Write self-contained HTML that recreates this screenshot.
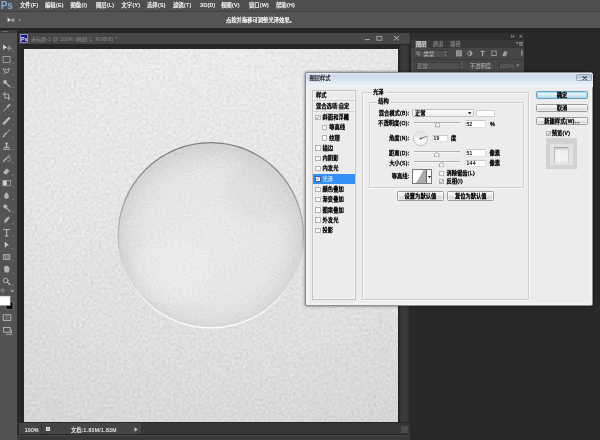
<!DOCTYPE html>
<html><head><meta charset="utf-8"><title>Photoshop</title><style>
html,body{margin:0;padding:0}
body{width:600px;height:440px;overflow:hidden;position:relative;background:#282828;font-family:"Liberation Sans","Noto Sans CJK SC",sans-serif}
.b{position:absolute;display:block}
.t{position:absolute;white-space:nowrap;font-size:5.3px;line-height:8px;height:8px;color:#111}
#ov text{font-family:"Liberation Sans","Noto Sans CJK SC",sans-serif;text-anchor:start;white-space:pre}
#ov g{stroke-linejoin:round}
</style></head><body>
<div class="b " style="left:0px;top:0px;width:600px;height:11.5px;background:#4f4f4f;border-bottom:1px solid #404040;box-sizing:border-box"></div>
<div class="b " style="left:0px;top:11.5px;width:600px;height:16.7px;background:#545454"></div>
<div class="b " style="left:0px;top:28.2px;width:600px;height:5px;background:#262626"></div>
<svg class="b" style="left:6px;top:16px;width:18px;height:9px" viewBox="0 0 18 9"><path d="M1.5 1.2 L5.2 4.2 L3.6 4.4 L1.8 6.2Z" fill="#ddd"/><path d="M6.8 2.2v4M4.8 4.2h4" stroke="#ccc" stroke-width=".8" fill="none"/><path d="M12.5 3.6h2.4l-1.2 1.4z" fill="#bbb"/></svg>
<div class="b " style="left:0px;top:30px;width:16.5px;height:410px;background:#535353"></div>
<div class="b " style="left:0px;top:30px;width:16.5px;height:3px;background:#3c3c3c"></div>
<div class="b " style="left:2px;top:31px;width:6px;height:1px;background:#6a6a6a"></div>
<div class="b " style="left:18.5px;top:32.8px;width:391.5px;height:402px;background:#272727"></div>
<div class="b " style="left:18.5px;top:32.8px;width:391.5px;height:11.7px;background:#474747"></div>
<div class="b " style="left:19.8px;top:34.2px;width:8px;height:8.6px;background:#1c1878;border:0.6px solid #8f90b8;box-sizing:border-box"></div>
<svg class="b" style="left:362px;top:34px;width:40px;height:9px" viewBox="0 0 40 9"><path d="M3 5.6h4.6" stroke="#a8a8a8" stroke-width="1.1"/><rect x="14.8" y="2.4" width="5" height="3.8" fill="none" stroke="#a8a8a8" stroke-width=".9"/><path d="M32 2l5 4.4M37 2l-5 4.4" stroke="#b4b4b4" stroke-width="1"/></svg>
<div class="b " style="left:400px;top:44.5px;width:8.5px;height:377.5px;background:linear-gradient(90deg,#323232,#3a3a3a 30%,#3a3a3a 70%,#303030)"></div>
<div class="b " style="left:18.5px;top:423.2px;width:391.5px;height:10.6px;background:#363636"></div>
<div class="b " style="left:18.5px;top:423.2px;width:122px;height:10.6px;background:#454545"></div>
<div class="b " style="left:41px;top:424px;width:0.8px;height:9px;background:#303030"></div>
<div class="b " style="left:401px;top:426.2px;width:7.4px;height:7.2px;background:#4c4c4c"></div>
<div class="b " style="left:45.6px;top:426.6px;width:4px;height:4.6px;background:#b0b0b0;border:1px solid #e0e0e0;box-sizing:border-box"></div>
<svg class="b" style="left:134px;top:427px;width:4px;height:5px" viewBox="0 0 4 5"><path d="M.5 .3L3.6 2.5L.5 4.7z" fill="#ccc"/></svg>
<div class="b " style="left:17px;top:435.4px;width:393px;height:4.6px;background:#393939;border-top:1px solid #454545;box-sizing:border-box"></div>
<svg class="b" style="left:23.5px;top:48.5px;width:374px;height:373.5px" viewBox="0 0 374 373.5">
<defs>
<linearGradient id="lg" x1="0" y1="0" x2="0" y2="1"><stop offset="0" stop-color="#eaeaea"/><stop offset=".45" stop-color="#e4e4e4"/><stop offset="1" stop-color="#dadada"/></linearGradient>
<radialGradient id="vg" cx="50%" cy="45%" r="75%"><stop offset=".55" stop-color="#000" stop-opacity="0"/><stop offset="1" stop-color="#000" stop-opacity=".025"/></radialGradient>
<radialGradient id="cg" cx="50%" cy="52%" r="50%"><stop offset="0" stop-color="#e9e9e9"/><stop offset=".7" stop-color="#e5e5e5"/><stop offset=".85" stop-color="#dfdfdf"/><stop offset="1" stop-color="#d3d3d3"/></radialGradient>
<linearGradient id="eg" x1="0" y1="0" x2="0" y2="1"><stop offset="0" stop-color="#7c7c7c"/><stop offset=".3" stop-color="#9c9c9c"/><stop offset=".55" stop-color="#c2c2c2"/><stop offset=".8" stop-color="#efefef"/><stop offset="1" stop-color="#fff"/></linearGradient>
<filter id="nz" x="0" y="0" width="100%" height="100%" color-interpolation-filters="sRGB"><feTurbulence type="fractalNoise" baseFrequency="0.36" numOctaves="2" seed="7" result="n"/><feColorMatrix in="n" type="matrix" values=".34 .33 .33 0 0  .34 .33 .33 0 0  .34 .33 .33 0 0  0 0 0 0 1" result="g"/><feComposite in="SourceGraphic" in2="g" operator="arithmetic" k1="0" k2="1" k3="0.22" k4="-0.11"/></filter>
<filter id="nz2" x="0" y="0" width="100%" height="100%" color-interpolation-filters="sRGB"><feTurbulence type="fractalNoise" baseFrequency="0.5" numOctaves="2" seed="11" result="n"/><feColorMatrix in="n" type="matrix" values=".34 .33 .33 0 0  .34 .33 .33 0 0  .34 .33 .33 0 0  0 0 0 0 1" result="g"/><feComposite in="SourceGraphic" in2="g" operator="arithmetic" k1="0" k2="1" k3="0.16" k4="-0.08" result="c"/><feComposite in="c" in2="SourceGraphic" operator="in"/></filter>
<filter id="bl"><feGaussianBlur stdDeviation="5"/></filter>
<clipPath id="cc"><circle cx="186.8" cy="186.3" r="92.6"/></clipPath>
</defs>
<g filter="url(#nz)">
<rect width="374" height="373.5" fill="url(#lg)"/>
<rect width="374" height="373.5" fill="url(#vg)"/>
</g>
<g filter="url(#nz2)"><circle cx="186.8" cy="186.3" r="92.6" fill="url(#cg)"/>
<g clip-path="url(#cc)">
<ellipse cx="236" cy="140" rx="34" ry="30" fill="#d2d2d2" filter="url(#bl)" opacity=".3"/>
<ellipse cx="150" cy="222" rx="40" ry="34" fill="#efefef" filter="url(#bl)" opacity=".35"/>
</g></g>
<circle cx="186.8" cy="186.3" r="92.6" fill="none" stroke="url(#eg)" stroke-width="1.3"/>
</svg>
<svg class="b" style="left:0;top:30px;width:17px;height:410px" viewBox="0 30 17 410"><g transform="translate(6.5 47.5)" fill="none" stroke="#b4b4b4" stroke-width=".9" stroke-linecap="round"><path d="M-3.5 -3L.6 .2L-1.3 .4L-3.2 2.4z" fill="#e0e0e0" stroke="none"/><path d="M2.6 -1.6v4.4M.4 .6h4.4" stroke-width=".8"/></g><g transform="translate(6.5 59.5)" fill="none" stroke="#b4b4b4" stroke-width=".9" stroke-linecap="round"><rect x="-3.4" y="-3" width="7" height="6" stroke-dasharray="1.2 .9" stroke-width=".8"/></g><g transform="translate(6.5 71)" fill="none" stroke="#b4b4b4" stroke-width=".9" stroke-linecap="round"><path d="M-3 -2.2q3.2 2.6 6 -.4l-1.6 4.2l-2.8 -.6zM-1 1.6l-1.6 1.8"/></g><g transform="translate(6.5 83.5)" fill="none" stroke="#b4b4b4" stroke-width=".9" stroke-linecap="round"><circle cx="-1.4" cy="-1.4" r="2" fill="#b4b4b4" stroke="none"/><path d="M.2 .2l3.2 3" stroke-width="1.3"/></g><g transform="translate(6.5 96)" fill="none" stroke="#b4b4b4" stroke-width=".9" stroke-linecap="round"><path d="M-1.8 -3.6v5.6h5.6M-3.6 -1.8h5.6v5.6" stroke-width=".9"/></g><g transform="translate(6.5 108)" fill="none" stroke="#b4b4b4" stroke-width=".9" stroke-linecap="round"><path d="M-3 3.2l4 -4.2" stroke-width="1"/><path d="M1.2 -1.4l1.8 -1.8" stroke-width="1.9"/></g><g transform="translate(6.5 121)" fill="none" stroke="#b4b4b4" stroke-width=".9" stroke-linecap="round"><path d="M-2.8 2.6l5.4 -5.4" stroke-width="2.4"/></g><g transform="translate(6.5 133.5)" fill="none" stroke="#b4b4b4" stroke-width=".9" stroke-linecap="round"><path d="M-3.2 3.4q1 -2.6 3 -3.6" stroke-width="1.4"/><path d="M.4 -.8l3 -3" stroke-width="1"/></g><g transform="translate(6.5 146)" fill="none" stroke="#b4b4b4" stroke-width=".9" stroke-linecap="round"><path d="M-3 3.2h6.2M-2.2 1.4h4.6M.1 1.2v-2.4" stroke-width="1.1"/><circle cx=".1" cy="-2.4" r="1.3" fill="#b4b4b4" stroke="none"/></g><g transform="translate(6.5 158.5)" fill="none" stroke="#b4b4b4" stroke-width=".9" stroke-linecap="round"><path d="M-3 3.2q1 -2.4 2.8 -3.4" stroke-width="1.3"/><path d="M.4 -.8l2.6 -2.6" stroke-width="1"/><path d="M1.6 2.8a2 2 0 1 0 -1.4 -1" stroke-width=".6"/></g><g transform="translate(6.5 171)" fill="none" stroke="#b4b4b4" stroke-width=".9" stroke-linecap="round"><path d="M-3.4 1.6l3.4 -4l3 2.2l-3.4 4z" fill="#b4b4b4" stroke="none"/></g><g transform="translate(6.5 183)" fill="none" stroke="#b4b4b4" stroke-width=".9" stroke-linecap="round"><rect x="-3.6" y="-2.6" width="7.4" height="5.4" stroke-width=".7"/><rect x="-3.2" y="-2.2" width="3.4" height="4.6" fill="#d8d8d8" stroke="none"/></g><g transform="translate(6.5 195.5)" fill="none" stroke="#b4b4b4" stroke-width=".9" stroke-linecap="round"><path d="M0 -3.6q3.6 4.2 1.8 6.2q-1.8 1.6 -3.6 0q-1.8 -2 1.8 -6.2z" fill="#b4b4b4" stroke="none"/></g><g transform="translate(6.5 208)" fill="none" stroke="#b4b4b4" stroke-width=".9" stroke-linecap="round"><circle cx="-1.2" cy="-1.4" r="2.1" fill="#b4b4b4" stroke="none"/><path d="M.4 .4l3 3" stroke-width="1.1"/></g><g transform="translate(6.5 220)" fill="none" stroke="#b4b4b4" stroke-width=".9" stroke-linecap="round"><path d="M-2.6 3.4l1 -4.2l3.6 -2.8l1.2 1.2l-2.6 3.8z" fill="#b4b4b4" stroke="none"/></g><g transform="translate(6.5 232.5)" fill="none" stroke="#b4b4b4" stroke-width=".9" stroke-linecap="round"><path d="M-2.8 -3h5.8M.1 -3v6.4M-1.2 3.4h2.6" stroke-width="1.2"/></g><g transform="translate(6.5 245)" fill="none" stroke="#b4b4b4" stroke-width=".9" stroke-linecap="round"><path d="M-1.8 -3.6l4.4 4l-2.2 .2l-2 2.4z" fill="#cfcfcf" stroke="none"/></g><g transform="translate(6.5 257)" fill="none" stroke="#b4b4b4" stroke-width=".9" stroke-linecap="round"><rect x="-3.2" y="-2.4" width="6.6" height="5" fill="#7a7a7a" stroke-width=".8"/></g><g transform="translate(6.5 269.5)" fill="none" stroke="#b4b4b4" stroke-width=".9" stroke-linecap="round"><path d="M-2.6 -.6q0 -3 2.6 -3.2q2.8 .2 3 3.2l-.6 3.6h-4z" fill="#b4b4b4" stroke="none"/></g><g transform="translate(6.5 281.5)" fill="none" stroke="#b4b4b4" stroke-width=".9" stroke-linecap="round"><circle cx="-.8" cy="-1" r="2.3" stroke-width="1"/><path d="M1 .8l2.6 2.6" stroke-width="1.3"/></g><rect x="12.4" y="50.7" width="1.1" height="1.1" fill="#8e8e8e"/><rect x="12.4" y="62.7" width="1.1" height="1.1" fill="#8e8e8e"/><rect x="12.4" y="74.2" width="1.1" height="1.1" fill="#8e8e8e"/><rect x="12.4" y="86.7" width="1.1" height="1.1" fill="#8e8e8e"/><rect x="12.4" y="99.2" width="1.1" height="1.1" fill="#8e8e8e"/><rect x="12.4" y="111.2" width="1.1" height="1.1" fill="#8e8e8e"/><rect x="12.4" y="124.2" width="1.1" height="1.1" fill="#8e8e8e"/><rect x="12.4" y="136.7" width="1.1" height="1.1" fill="#8e8e8e"/><rect x="12.4" y="149.2" width="1.1" height="1.1" fill="#8e8e8e"/><rect x="12.4" y="161.7" width="1.1" height="1.1" fill="#8e8e8e"/><rect x="12.4" y="174.2" width="1.1" height="1.1" fill="#8e8e8e"/><rect x="12.4" y="186.2" width="1.1" height="1.1" fill="#8e8e8e"/><rect x="12.4" y="198.7" width="1.1" height="1.1" fill="#8e8e8e"/><rect x="12.4" y="211.2" width="1.1" height="1.1" fill="#8e8e8e"/><rect x="12.4" y="223.2" width="1.1" height="1.1" fill="#8e8e8e"/><rect x="12.4" y="235.7" width="1.1" height="1.1" fill="#8e8e8e"/><rect x="12.4" y="248.2" width="1.1" height="1.1" fill="#8e8e8e"/><rect x="12.4" y="260.2" width="1.1" height="1.1" fill="#8e8e8e"/><rect x="12.4" y="272.7" width="1.1" height="1.1" fill="#8e8e8e"/><rect x="12.4" y="284.7" width="1.1" height="1.1" fill="#8e8e8e"/><path d="M1.2 290.5a1.4 1.4 0 1 1 0 .1M11 289.5l2 2M13 289.5v2h-2" stroke="#bbb" stroke-width=".7" fill="none"/><rect x="6" y="302" width="7" height="7.6" fill="#0c0c0c" stroke="#8d8d8d" stroke-width=".6"/><rect x="-1" y="296" width="11.2" height="9.6" fill="#fff" stroke="#8d8d8d" stroke-width=".6"/><rect x="3.2" y="314.8" width="7.6" height="5.6" fill="none" stroke="#bdbdbd" stroke-width=".9"/><circle cx="7" cy="317.6" r="1.2" fill="none" stroke="#bdbdbd" stroke-width=".6" stroke-dasharray=".7 .5"/><rect x="3.6" y="327.6" width="6.6" height="4.6" fill="none" stroke="#bdbdbd" stroke-width=".9"/><path d="M5.8 334.4h5.6v-4.6" fill="none" stroke="#bdbdbd" stroke-width=".8"/></svg>
<div class="b " style="left:411px;top:33px;width:112.5px;height:40px;background:#464646"></div>
<div class="b " style="left:411px;top:33px;width:112.5px;height:7px;background:#2f2f2f"></div>
<div class="b " style="left:411px;top:40px;width:112.5px;height:8px;background:#393939"></div>
<div class="b " style="left:415px;top:40.6px;width:12.4px;height:7.4px;background:#5c5c5c"></div>
<div class="b " style="left:415.5px;top:49.6px;width:32px;height:8.2px;background:#505050;border:1px solid #3c3c3c;box-sizing:border-box"></div>
<div class="b " style="left:411px;top:59.3px;width:112.5px;height:1px;background:#3a3a3a"></div>
<div class="b " style="left:415.5px;top:61.6px;width:44.5px;height:8.2px;background:#4f4f4f;border:1px solid #3c3c3c;box-sizing:border-box"></div>
<div class="b " style="left:498px;top:61.8px;width:16px;height:8px;background:#424242"></div>
<svg class="b" style="left:411px;top:33px;width:113px;height:40px" viewBox="411 33 113 40" fill="none" stroke="#9a9a9a" stroke-width=".8"><path d="M511 35.2l1.4 1.2l-1.4 1.2M513 35.2l1.4 1.2l-1.4 1.2" stroke="#b5b5b5" stroke-width=".7"/><path d="M519.6 35.2l2.2 2.4M521.8 35.2l-2.2 2.4" stroke="#b5b5b5" stroke-width=".7"/><path d="M516.4 42.6h1.8l-.9 1.2zM519 42.4h4M519 43.8h4M519 45.2h4" stroke="#a8a8a8" stroke-width=".7"/><circle cx="417.6" cy="53" r="1.5" stroke="#aaa" stroke-width=".7"/><path d="M418.6 54.2l1.4 1.8" stroke="#aaa"/><path d="M445 52.4l1 -1.2l1 1.2M445 54.6l1 1.2l1 -1.2" stroke="#999" stroke-width=".6"/><rect x="456.4" y="50.8" width="5.2" height="5.2" fill="#8a8a8a" stroke="#b0b0b0" stroke-width=".6"/><circle cx="469.8" cy="53.4" r="2.3" stroke="#a0a0a0"/><path d="M469.8 51.1a2.3 2.3 0 0 1 0 4.6z" fill="#a0a0a0" stroke="none"/><path d="M480.6 51.4h4M482.6 51.4v4.6" stroke="#b4b4b4" stroke-width="1"/><rect x="491.8" y="51" width="4.4" height="4.6" stroke="#a8a8a8" stroke-width=".8"/><path d="M502.6 56l1.6 -4.2h2.8l-1.2 4.2z" fill="#9a9a9a" stroke="#b0b0b0" stroke-width=".5"/><rect x="521" y="50.4" width="1.6" height="5.4" fill="#8c8c8c" stroke="none"/><path d="M460.6 64.6l1 -1.2l1 1.2M460.6 66.8l1 1.2l1 -1.2" stroke="#999" stroke-width=".6"/><path d="M516 64.6h3.6l-1.8 2.2z" fill="#8a8a8a" stroke="none"/></svg>
<div class="b " style="left:305.3px;top:72px;width:288px;height:234.3px;background:#f3f3f3;border:0.7px solid #8e8e8e;box-sizing:border-box;box-shadow:0 0 3px rgba(0,0,0,.6);border-radius:2px"></div>
<div class="b " style="left:306px;top:72.7px;width:286.6px;height:14px;background:linear-gradient(#f4f7fb 0,#cfdcee 8%,#d3dff0 35%,#e3ebf5 70%,#f1f4f8);border-radius:2px 2px 0 0"></div>
<div class="b " style="left:309px;top:86.5px;width:280.7px;height:216px;background:#ececec"></div>
<div class="b " style="left:576.4px;top:74.2px;width:15.2px;height:6.8px;background:linear-gradient(#c9d3e3,#aebcd2 45%,#bfcbdc 55%,#e3e9f1);border:1px solid #97a4ba;box-sizing:border-box;border-radius:1.5px"></div>
<svg class="b" style="left:581.8px;top:75.6px;width:5.4px;height:4.2px" viewBox="0 0 5.4 4.2"><path d="M.6 .4L4.8 3.8M4.8 .4L.6 3.8" fill="none" stroke="#39435a" stroke-width="1.2"/></svg>
<div class="b " style="left:312.2px;top:89.5px;width:43.5px;height:210px;background:#ececec;border:1px solid #c4c4c4;box-sizing:border-box;box-shadow:inset 0 0 0 0.6px #f8f8f8"></div>
<div class="b " style="left:313px;top:100px;width:42px;height:1px;background:#d2d2d2"></div>
<div class="b " style="left:313px;top:111.2px;width:42px;height:1px;background:#d2d2d2"></div>
<div class="b " style="left:315.2px;top:114.60000000000001px;width:5.4px;height:5.4px;background:#f9f9f9;border:1px solid #b1b4b9;box-sizing:border-box"></div><svg class="b" style="left:315.3px;top:114.7px;width:5.2px;height:5.2px" viewBox="0 0 5.2 5.2"><path d="M1.1 2.7l1.1 1.2l2-2.7" fill="none" stroke="#5a6788" stroke-width=".7"/></svg>
<div class="b " style="left:321.8px;top:124.88000000000001px;width:5.4px;height:5.4px;background:#f9f9f9;border:1px solid #b1b4b9;box-sizing:border-box"></div>
<div class="b " style="left:321.8px;top:135.16px;width:5.4px;height:5.4px;background:#f9f9f9;border:1px solid #b1b4b9;box-sizing:border-box"></div>
<div class="b " style="left:315.2px;top:145.44px;width:5.4px;height:5.4px;background:#f9f9f9;border:1px solid #b1b4b9;box-sizing:border-box"></div>
<div class="b " style="left:315.2px;top:155.72px;width:5.4px;height:5.4px;background:#f9f9f9;border:1px solid #b1b4b9;box-sizing:border-box"></div>
<div class="b " style="left:315.2px;top:166.0px;width:5.4px;height:5.4px;background:#f9f9f9;border:1px solid #b1b4b9;box-sizing:border-box"></div>
<div class="b " style="left:313px;top:173.98px;width:42.2px;height:9.8px;background:#3390f4"></div>
<div class="b " style="left:315.2px;top:176.28px;width:5.4px;height:5.4px;background:#f9f9f9;border:1px solid #4a5f95;box-sizing:border-box"></div><svg class="b" style="left:315.3px;top:176.38px;width:5.2px;height:5.2px" viewBox="0 0 5.2 5.2"><path d="M1.1 2.7l1.1 1.2l2-2.7" fill="none" stroke="#5a6788" stroke-width=".7"/></svg>
<div class="b " style="left:315.2px;top:186.56px;width:5.4px;height:5.4px;background:#f9f9f9;border:1px solid #b1b4b9;box-sizing:border-box"></div>
<div class="b " style="left:315.2px;top:196.84px;width:5.4px;height:5.4px;background:#f9f9f9;border:1px solid #b1b4b9;box-sizing:border-box"></div>
<div class="b " style="left:315.2px;top:207.12px;width:5.4px;height:5.4px;background:#f9f9f9;border:1px solid #b1b4b9;box-sizing:border-box"></div>
<div class="b " style="left:315.2px;top:217.4px;width:5.4px;height:5.4px;background:#f9f9f9;border:1px solid #b1b4b9;box-sizing:border-box"></div>
<div class="b " style="left:315.2px;top:227.68px;width:5.4px;height:5.4px;background:#f9f9f9;border:1px solid #b1b4b9;box-sizing:border-box"></div>
<div class="b " style="left:362px;top:92.3px;width:166.5px;height:208px;border:0.7px solid #d0d0d0;box-sizing:border-box;box-shadow:0.6px 0.6px 0 #fff, inset 0.6px 0.6px 0 #fff"></div>
<div class="b " style="left:368.5px;top:101.5px;width:155.5px;height:86.2px;border:0.7px solid #cfcfcf;box-sizing:border-box;box-shadow:0.6px 0.6px 0 #fff, inset 0.6px 0.6px 0 #fff"></div>
<div class="b " style="left:371.5px;top:88px;width:14.5px;height:8px;background:#ececec"></div>
<div class="b " style="left:377px;top:97px;width:13.5px;height:8px;background:#ececec"></div>
<div class="b " style="left:412.3px;top:109.3px;width:61.3px;height:8.2px;background:linear-gradient(#fdfdfd,#ededed);border:1px solid #c2c2c2;box-sizing:border-box;border-radius:1px"></div>
<svg class="b" style="left:468.3px;top:112.3px;width:3.4px;height:2.4px" viewBox="0 0 3.4 2.4"><path d="M0 0h3.4L1.7 2.4z" fill="#222"/></svg>
<div class="b " style="left:476px;top:109.5px;width:19px;height:7.4px;background:#fff;border:1px solid #cfcfcf;box-sizing:border-box"></div>
<div class="b " style="left:414px;top:121.89999999999999px;width:45.5px;height:2px;background:linear-gradient(#a9a9a9,#bdbdbd 55%,#f6f6f6 60%)"></div><svg class="b" style="left:434.90000000000003px;top:122.3px;width:5.4px;height:5.4px" viewBox="0 0 5.4 5.4"><path d="M2.7 .4L4.9 2V4.9H.5V2z" fill="#f2f2f2" stroke="#8a8a8a" stroke-width=".7" stroke-linejoin="round"/></svg>
<div class="b " style="left:464.6px;top:120.4px;width:21.3px;height:7.6px;background:#fff;border:1px solid #e0e0e0;border-top-color:#c6c6c6;box-sizing:border-box"></div>
<div class="b " style="left:414px;top:151.10000000000002px;width:45.5px;height:2px;background:linear-gradient(#a9a9a9,#bdbdbd 55%,#f6f6f6 60%)"></div><svg class="b" style="left:434.3px;top:151.5px;width:5.4px;height:5.4px" viewBox="0 0 5.4 5.4"><path d="M2.7 .4L4.9 2V4.9H.5V2z" fill="#f2f2f2" stroke="#8a8a8a" stroke-width=".7" stroke-linejoin="round"/></svg>
<div class="b " style="left:464.6px;top:149.4px;width:21.3px;height:7.6px;background:#fff;border:1px solid #e0e0e0;border-top-color:#c6c6c6;box-sizing:border-box"></div>
<div class="b " style="left:414px;top:161.3px;width:45.5px;height:2px;background:linear-gradient(#a9a9a9,#bdbdbd 55%,#f6f6f6 60%)"></div><svg class="b" style="left:439.0px;top:161.7px;width:5.4px;height:5.4px" viewBox="0 0 5.4 5.4"><path d="M2.7 .4L4.9 2V4.9H.5V2z" fill="#f2f2f2" stroke="#8a8a8a" stroke-width=".7" stroke-linejoin="round"/></svg>
<div class="b " style="left:464.6px;top:159.6px;width:21.3px;height:7.6px;background:#fff;border:1px solid #e0e0e0;border-top-color:#c6c6c6;box-sizing:border-box"></div>
<svg class="b" style="left:413.2px;top:131.2px;width:15.2px;height:15.2px" viewBox="0 0 15.2 15.2"><circle cx="7.6" cy="7.6" r="7" fill="#f7f7f7" stroke="#ababab" stroke-width=".7"/><path d="M7.6 7.6L1.2 4.8A7 7 0 0 1 14 4.8z" fill="#e6e6e6"/><path d="M7.6 7.6L13.6 5.5" stroke="#333" stroke-width=".7"/><path d="M6.6 7.6h2M7.6 6.6v2" stroke="#333" stroke-width=".6"/></svg>
<div class="b " style="left:431.6px;top:134.8px;width:16.6px;height:7.6px;background:#fff;border:1px solid #e0e0e0;border-top-color:#c6c6c6;box-sizing:border-box"></div>
<div class="b " style="left:411.8px;top:169.4px;width:20px;height:14.6px;background:#fff;border:1px solid #787878;box-sizing:border-box"></div>
<svg class="b" style="left:412.5px;top:170.1px;width:13.5px;height:13.2px" viewBox="0 0 13.5 13.2"><rect width="13.5" height="13.2" fill="#fff"/><path d="M2.5 13.2C5 11 8 4 10.5 0H13.5V13.2z" fill="#aaa"/></svg>
<div class="b " style="left:426px;top:170px;width:0.7px;height:13.4px;background:#666"></div>
<svg class="b" style="left:427.6px;top:175.6px;width:3px;height:2.2px" viewBox="0 0 3 2.2"><path d="M0 0h3L1.5 2.2z" fill="#111"/></svg>
<div class="b " style="left:439px;top:170.8px;width:5.4px;height:5.4px;background:#f9f9f9;border:1px solid #b1b4b9;box-sizing:border-box"></div>
<div class="b " style="left:439px;top:178.70000000000002px;width:5.4px;height:5.4px;background:#f9f9f9;border:1px solid #b1b4b9;box-sizing:border-box"></div><svg class="b" style="left:439.1px;top:178.8px;width:5.2px;height:5.2px" viewBox="0 0 5.2 5.2"><path d="M1.1 2.7l1.1 1.2l2-2.7" fill="none" stroke="#5a6788" stroke-width=".7"/></svg>
<div class="b btn" style="left:397px;top:191.3px;width:46.8px;height:9.3px;background:linear-gradient(#f7f7f7,#ececec 48%,#dedede 52%,#d6d6d6);border:1px solid #9c9c9c;box-sizing:border-box;border-radius:1.5px;box-shadow:inset 0 0 0 0.6px #fcfcfc"></div>
<div class="b btn" style="left:447.3px;top:191.3px;width:46.8px;height:9.3px;background:linear-gradient(#f7f7f7,#ececec 48%,#dedede 52%,#d6d6d6);border:1px solid #9c9c9c;box-sizing:border-box;border-radius:1.5px;box-shadow:inset 0 0 0 0.6px #fcfcfc"></div>
<div class="b btn" style="left:535.8px;top:90.6px;width:52.6px;height:8.5px;background:linear-gradient(#eef6fb,#e0eff8 48%,#cfe6f3 52%,#c3deee);border:1px solid #6f9cb8;box-sizing:border-box;border-radius:1.5px;box-shadow:inset 0 0 0 0.8px #8fdcf2"></div>
<div class="b btn" style="left:535.8px;top:103.6px;width:52.6px;height:8.5px;background:linear-gradient(#f7f7f7,#ececec 48%,#dedede 52%,#d6d6d6);border:1px solid #9c9c9c;box-sizing:border-box;border-radius:1.5px;box-shadow:inset 0 0 0 0.6px #fcfcfc"></div>
<div class="b btn" style="left:535.8px;top:116.7px;width:52.6px;height:8.5px;background:linear-gradient(#f7f7f7,#ececec 48%,#dedede 52%,#d6d6d6);border:1px solid #9c9c9c;box-sizing:border-box;border-radius:1.5px;box-shadow:inset 0 0 0 0.6px #fcfcfc"></div>
<div class="b " style="left:545.6px;top:130.70000000000002px;width:5.4px;height:5.4px;background:#f9f9f9;border:1px solid #b1b4b9;box-sizing:border-box"></div><svg class="b" style="left:545.7px;top:130.8px;width:5.2px;height:5.2px" viewBox="0 0 5.2 5.2"><path d="M1.1 2.7l1.1 1.2l2-2.7" fill="none" stroke="#5a6788" stroke-width=".7"/></svg>
<div class="b " style="left:546px;top:138px;width:30.6px;height:30.6px;background:#d2d2d2"></div>
<div class="b " style="left:550.4px;top:143.5px;width:22.4px;height:21.3px;background:#e2e2e2"></div>
<div class="b " style="left:554.2px;top:147.3px;width:14.4px;height:15.3px;background:linear-gradient(#8e8e8e,#cfcfcf 9%,#ececec 22%,#f1f1f1 80%,#e6e6e6);border-left:1px solid #bcbcbc;border-right:1px solid #cdcdcd;box-sizing:border-box"></div>
<div class="b " style="left:556.5px;top:149.5px;width:3.4px;height:12px;background:linear-gradient(90deg,rgba(255,255,255,0),rgba(255,255,255,.7),rgba(255,255,255,0))"></div>
<svg id="ov" class="b" style="left:0;top:0;width:600px;height:440px;will-change:transform;filter:blur(0.3px)" viewBox="0 0 600 440"><text x="0.8" y="8.8" font-size="10" font-weight="bold" fill="#84a9d2" style="text-anchor:start" letter-spacing="-0.2">Ps</text>
<text x="20.00" y="7.47" fill="#f2f2f2" font-size="5.35" stroke="#f2f2f2" stroke-width="0.225">文件</text><text x="30.89" y="7.47" fill="#f2f2f2" font-size="5.08" stroke="#f2f2f2" stroke-width="0.225" letter-spacing="0.374" xml:space="preserve">(F)</text>
<text x="45.00" y="7.47" fill="#f2f2f2" font-size="5.35" stroke="#f2f2f2" stroke-width="0.225">编辑</text><text x="55.89" y="7.47" fill="#f2f2f2" font-size="5.08" stroke="#f2f2f2" stroke-width="0.225" letter-spacing="0.374" xml:space="preserve">(E)</text>
<text x="70.50" y="7.47" fill="#f2f2f2" font-size="5.35" stroke="#f2f2f2" stroke-width="0.225">图像</text><text x="81.39" y="7.47" fill="#f2f2f2" font-size="5.08" stroke="#f2f2f2" stroke-width="0.225" letter-spacing="0.374" xml:space="preserve">(I)</text>
<text x="96.00" y="7.47" fill="#f2f2f2" font-size="5.35" stroke="#f2f2f2" stroke-width="0.225">图层</text><text x="106.89" y="7.47" fill="#f2f2f2" font-size="5.08" stroke="#f2f2f2" stroke-width="0.225" letter-spacing="0.374" xml:space="preserve">(L)</text>
<text x="121.50" y="7.47" fill="#f2f2f2" font-size="5.35" stroke="#f2f2f2" stroke-width="0.225">文字</text><text x="132.39" y="7.47" fill="#f2f2f2" font-size="5.08" stroke="#f2f2f2" stroke-width="0.225" letter-spacing="0.374" xml:space="preserve">(Y)</text>
<text x="147.00" y="7.47" fill="#f2f2f2" font-size="5.35" stroke="#f2f2f2" stroke-width="0.225">选择</text><text x="157.89" y="7.47" fill="#f2f2f2" font-size="5.08" stroke="#f2f2f2" stroke-width="0.225" letter-spacing="0.374" xml:space="preserve">(S)</text>
<text x="173.00" y="7.47" fill="#f2f2f2" font-size="5.35" stroke="#f2f2f2" stroke-width="0.225">滤镜</text><text x="183.89" y="7.47" fill="#f2f2f2" font-size="5.08" stroke="#f2f2f2" stroke-width="0.225" letter-spacing="0.374" xml:space="preserve">(T)</text>
<text x="200.19" y="7.47" fill="#f2f2f2" font-size="5.08" stroke="#f2f2f2" stroke-width="0.225" letter-spacing="0.374" xml:space="preserve">3D(D)</text>
<text x="221.00" y="7.47" fill="#f2f2f2" font-size="5.35" stroke="#f2f2f2" stroke-width="0.225">视图</text><text x="231.89" y="7.47" fill="#f2f2f2" font-size="5.08" stroke="#f2f2f2" stroke-width="0.225" letter-spacing="0.374" xml:space="preserve">(V)</text>
<text x="249.00" y="7.47" fill="#f2f2f2" font-size="5.35" stroke="#f2f2f2" stroke-width="0.225">窗口</text><text x="259.89" y="7.47" fill="#f2f2f2" font-size="5.08" stroke="#f2f2f2" stroke-width="0.225" letter-spacing="0.374" xml:space="preserve">(W)</text>
<text x="276.00" y="7.47" fill="#f2f2f2" font-size="5.35" stroke="#f2f2f2" stroke-width="0.225">帮助</text><text x="286.89" y="7.47" fill="#f2f2f2" font-size="5.08" stroke="#f2f2f2" stroke-width="0.225" letter-spacing="0.374" xml:space="preserve">(H)</text>
<text x="226.00" y="21.86" fill="#ffffff" font-size="5.30" stroke="#ffffff" stroke-width="0.223">点按并拖移可调整光泽效果。</text>
<text x="21" y="40.6" font-size="5.4" font-weight="bold" fill="#e8e8ff" style="text-anchor:start">Ps</text>
<text x="31.00" y="40.57" fill="#8c8c8c" font-size="5.05" stroke="#8c8c8c" stroke-width="0.030">未标题</text><text x="46.33" y="40.57" fill="#8c8c8c" font-size="4.80" stroke="#8c8c8c" stroke-width="0.030" letter-spacing="0.354" xml:space="preserve">-1 @ 100% (</text><text x="77.04" y="40.57" fill="#8c8c8c" font-size="5.05" stroke="#8c8c8c" stroke-width="0.030">椭圆</text><text x="87.32" y="40.57" fill="#8c8c8c" font-size="4.80" stroke="#8c8c8c" stroke-width="0.030" letter-spacing="0.354" xml:space="preserve"> 1, RGB/8) *</text>
<text x="24.68" y="431.64" fill="#eeeeee" font-size="5.01" stroke="#eeeeee" stroke-width="0.126" letter-spacing="0.369" xml:space="preserve">100%</text>
<text x="71.00" y="431.64" fill="#eeeeee" font-size="5.27" stroke="#eeeeee" stroke-width="0.126">文档</text><text x="81.72" y="431.64" fill="#eeeeee" font-size="5.01" stroke="#eeeeee" stroke-width="0.126" letter-spacing="0.369" xml:space="preserve">:1.83M/1.83M</text>
<text x="415.90" y="46.14" fill="#f2f2f2" font-size="5.27" stroke="#f2f2f2" stroke-width="0.063">图层</text>
<text x="432.80" y="46.14" fill="#9a9a9a" font-size="5.27" stroke="#9a9a9a" stroke-width="0.032">通道</text>
<text x="450.30" y="46.14" fill="#9a9a9a" font-size="5.27" stroke="#9a9a9a" stroke-width="0.032">路径</text>
<text x="423.50" y="55.55" fill="#b8b8b8" font-size="5.27" stroke="#b8b8b8" stroke-width="0.032">类型</text>
<text x="417.20" y="67.64" fill="#9a9a9a" font-size="5.27" stroke="#9a9a9a" stroke-width="0.032">正常</text>
<text x="470.00" y="67.64" fill="#b8b8b8" font-size="5.27" stroke="#b8b8b8" stroke-width="0.032">不透明度</text><text x="491.26" y="67.64" fill="#b8b8b8" font-size="5.01" stroke="#b8b8b8" stroke-width="0.032" letter-spacing="0.369" xml:space="preserve">:</text>
<text x="499.78" y="67.64" fill="#7a7a7a" font-size="5.01" stroke="#7a7a7a" stroke-width="0.032" letter-spacing="0.369" xml:space="preserve">100%</text>
<text x="309.50" y="80.44" fill="#101010" font-size="5.27" stroke="#101010" stroke-width="0.174">图层样式</text>
<text x="316.00" y="96.64" fill="#000000" font-size="5.27" stroke="#000000" stroke-width="0.316">样式</text>
<text x="316.00" y="107.84" fill="#000000" font-size="5.27" stroke="#000000" stroke-width="0.316">混合选项</text><text x="337.26" y="107.84" fill="#000000" font-size="5.01" stroke="#000000" stroke-width="0.316" letter-spacing="0.369" xml:space="preserve">:</text><text x="338.84" y="107.84" fill="#000000" font-size="5.27" stroke="#000000" stroke-width="0.316">自定</text>
<text x="322.60" y="119.04" fill="#000000" font-size="5.27" stroke="#000000" stroke-width="0.316">斜面和浮雕</text>
<text x="329.20" y="129.32" fill="#000000" font-size="5.27" stroke="#000000" stroke-width="0.316">等高线</text>
<text x="329.20" y="139.60" fill="#000000" font-size="5.27" stroke="#000000" stroke-width="0.316">纹理</text>
<text x="322.60" y="149.89" fill="#000000" font-size="5.27" stroke="#000000" stroke-width="0.316">描边</text>
<text x="322.60" y="160.17" fill="#000000" font-size="5.27" stroke="#000000" stroke-width="0.316">内阴影</text>
<text x="322.60" y="170.45" fill="#000000" font-size="5.27" stroke="#000000" stroke-width="0.316">内发光</text>
<text x="322.60" y="180.73" fill="#d6e8ff" font-size="5.27" stroke="#d6e8ff" stroke-width="0.095">光泽</text>
<text x="322.60" y="191.01" fill="#000000" font-size="5.27" stroke="#000000" stroke-width="0.316">颜色叠加</text>
<text x="322.60" y="201.29" fill="#000000" font-size="5.27" stroke="#000000" stroke-width="0.316">渐变叠加</text>
<text x="322.60" y="211.57" fill="#000000" font-size="5.27" stroke="#000000" stroke-width="0.316">图案叠加</text>
<text x="322.60" y="221.85" fill="#000000" font-size="5.27" stroke="#000000" stroke-width="0.316">外发光</text>
<text x="322.60" y="232.13" fill="#000000" font-size="5.27" stroke="#000000" stroke-width="0.316">投影</text>
<text x="373.00" y="93.84" fill="#000000" font-size="5.27" stroke="#000000" stroke-width="0.316">光泽</text>
<text x="378.30" y="103.04" fill="#000000" font-size="5.27" stroke="#000000" stroke-width="0.316">结构</text>
<text x="378.68" y="115.04" fill="#000000" font-size="5.27" stroke="#000000" stroke-width="0.316">混合模式</text><text x="399.94" y="115.04" fill="#000000" font-size="5.01" stroke="#000000" stroke-width="0.316" letter-spacing="0.369" xml:space="preserve">(B):</text>
<text x="378.12" y="125.44" fill="#000000" font-size="5.27" stroke="#000000" stroke-width="0.316">不透明度</text><text x="399.39" y="125.44" fill="#000000" font-size="5.01" stroke="#000000" stroke-width="0.316" letter-spacing="0.369" xml:space="preserve">(O):</text>
<text x="388.94" y="140.34" fill="#000000" font-size="5.27" stroke="#000000" stroke-width="0.316">角度</text><text x="399.67" y="140.34" fill="#000000" font-size="5.01" stroke="#000000" stroke-width="0.316" letter-spacing="0.369" xml:space="preserve">(N):</text>
<text x="388.94" y="155.24" fill="#000000" font-size="5.27" stroke="#000000" stroke-width="0.316">距离</text><text x="399.67" y="155.24" fill="#000000" font-size="5.01" stroke="#000000" stroke-width="0.316" letter-spacing="0.369" xml:space="preserve">(D):</text>
<text x="389.22" y="165.44" fill="#000000" font-size="5.27" stroke="#000000" stroke-width="0.316">大小</text><text x="399.94" y="165.44" fill="#000000" font-size="5.01" stroke="#000000" stroke-width="0.316" letter-spacing="0.369" xml:space="preserve">(S):</text>
<text x="391.73" y="178.04" fill="#000000" font-size="5.27" stroke="#000000" stroke-width="0.316">等高线</text><text x="407.72" y="178.04" fill="#000000" font-size="5.01" stroke="#000000" stroke-width="0.316" letter-spacing="0.369" xml:space="preserve">:</text>
<text x="415.00" y="115.14" fill="#000000" font-size="5.27" stroke="#000000" stroke-width="0.316">正常</text>
<text x="466.38" y="126.04" fill="#101010" font-size="5.01" stroke="#101010" stroke-width="0.158" letter-spacing="0.369" xml:space="preserve">52</text>
<text x="490.18" y="126.04" fill="#000000" font-size="5.01" stroke="#000000" stroke-width="0.316" letter-spacing="0.369" xml:space="preserve">%</text>
<text x="466.38" y="155.04" fill="#101010" font-size="5.01" stroke="#101010" stroke-width="0.158" letter-spacing="0.369" xml:space="preserve">51</text>
<text x="489.60" y="155.24" fill="#000000" font-size="5.27" stroke="#000000" stroke-width="0.316">像素</text>
<text x="466.38" y="165.24" fill="#101010" font-size="5.01" stroke="#101010" stroke-width="0.158" letter-spacing="0.369" xml:space="preserve">144</text>
<text x="489.60" y="165.44" fill="#000000" font-size="5.27" stroke="#000000" stroke-width="0.316">像素</text>
<text x="433.38" y="140.44" fill="#101010" font-size="5.01" stroke="#101010" stroke-width="0.158" letter-spacing="0.369" xml:space="preserve">19</text>
<text x="451.00" y="140.44" fill="#000000" font-size="5.27" stroke="#000000" stroke-width="0.316">度</text>
<text x="446.50" y="175.34" fill="#000000" font-size="5.27" stroke="#000000" stroke-width="0.316">消除锯齿</text><text x="467.76" y="175.34" fill="#000000" font-size="5.01" stroke="#000000" stroke-width="0.316" letter-spacing="0.369" xml:space="preserve">(L)</text>
<text x="446.50" y="183.24" fill="#000000" font-size="5.27" stroke="#000000" stroke-width="0.316">反相</text><text x="457.22" y="183.24" fill="#000000" font-size="5.01" stroke="#000000" stroke-width="0.316" letter-spacing="0.369" xml:space="preserve">(I)</text>
<text x="404.59" y="197.80" fill="#000000" font-size="5.27" stroke="#000000" stroke-width="0.316">设置为默认值</text>
<text x="454.89" y="197.80" fill="#000000" font-size="5.27" stroke="#000000" stroke-width="0.316">复位为默认值</text>
<text x="556.83" y="96.69" fill="#000000" font-size="5.27" stroke="#000000" stroke-width="0.316">确定</text>
<text x="556.83" y="109.69" fill="#000000" font-size="5.27" stroke="#000000" stroke-width="0.316">取消</text>
<text x="544.34" y="122.79" fill="#000000" font-size="5.27" stroke="#000000" stroke-width="0.316">新建样式</text><text x="565.60" y="122.79" fill="#000000" font-size="5.01" stroke="#000000" stroke-width="0.316" letter-spacing="0.369" xml:space="preserve">(W)...</text>
<text x="551.80" y="135.24" fill="#000000" font-size="5.27" stroke="#000000" stroke-width="0.316">预览</text><text x="562.52" y="135.24" fill="#000000" font-size="5.01" stroke="#000000" stroke-width="0.316" letter-spacing="0.369" xml:space="preserve">(V)</text></svg>
</body></html>
